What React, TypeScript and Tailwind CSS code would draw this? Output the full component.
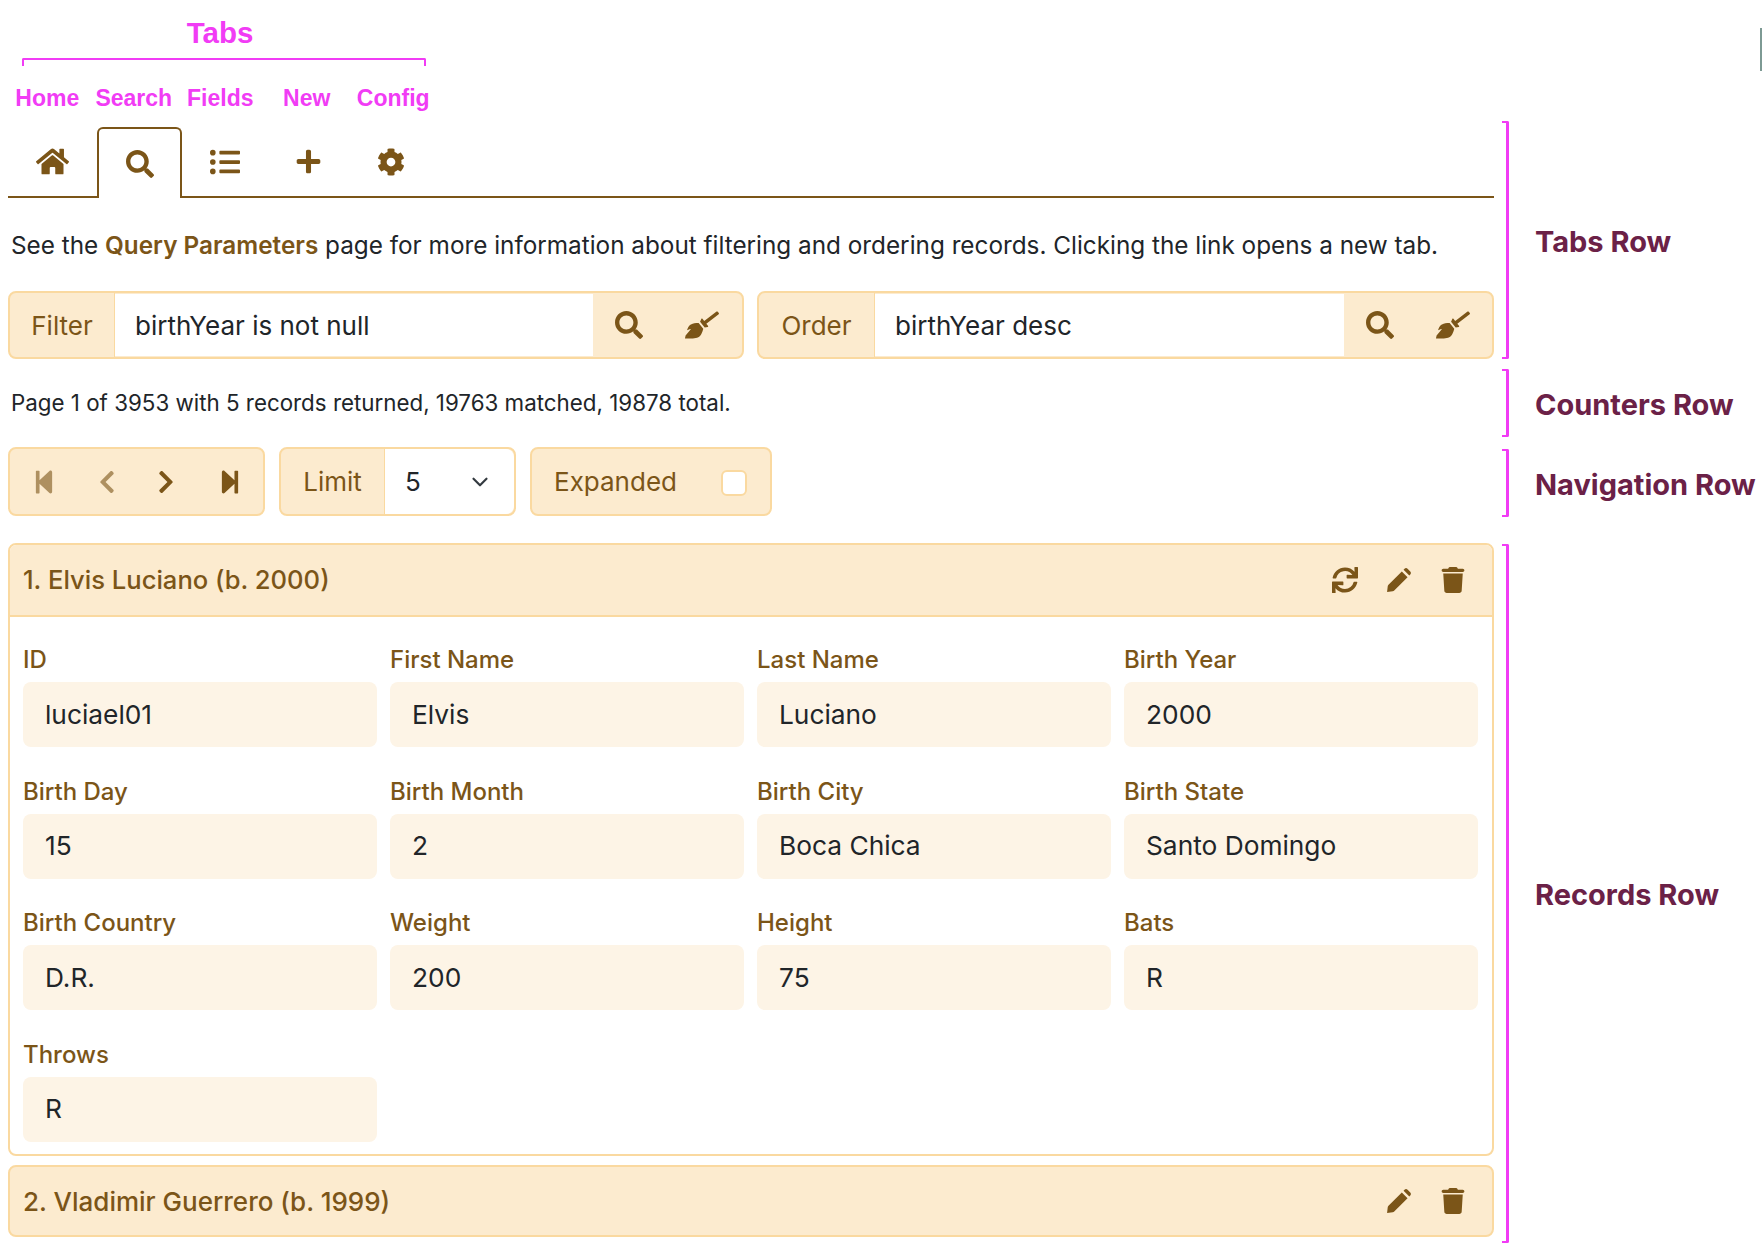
import { FaBroom, FaChevronLeft, FaChevronRight, FaCog, FaHome, FaListUl, FaPlus, FaSearch, FaStepBackward, FaStepForward, FaSync } from "react-icons/fa";
import { FaTrash } from "react-icons/fa6";
import { LuChevronDown } from "react-icons/lu";

const fields = [
  ["ID", "luciael01"],
  ["First Name", "Elvis"],
  ["Last Name", "Luciano"],
  ["Birth Year", "2000"],
  ["Birth Day", "15"],
  ["Birth Month", "2"],
  ["Birth City", "Boca Chica"],
  ["Birth State", "Santo Domingo"],
  ["Birth Country", "D.R."],
  ["Weight", "200"],
  ["Height", "75"],
  ["Bats", "R"],
  ["Throws", "R"],
];

const tabLabels = ["Home", "Search", "Fields", "New", "Config"];

function Pencil({ className }: { className: string }) {
  return (
    <svg viewBox="0 0 24 24" fill="currentColor" className={className}>
      <path d="M1 23l.6-5.2c.1-.6.3-1 .7-1.4L14.6 4.1l5.3 5.3L7.6 21.7c-.4.4-.8.6-1.4.7z" />
      <path d="M16.2 2.5l.9-.9c.8-.8 2-.8 2.8 0l2.5 2.5c.8.8.8 2 0 2.8l-.9.9z" />
    </svg>
  );
}

function RowNote({ label, className }: { label: string; className: string }) {
  return (
    <div className={`flex items-center ${className}`}>
      <div className="h-full w-[7px] rounded-r-[2px] border-y-2 border-r-[3px] border-[#f13cf5]" />
      <span className="ml-[26px] mt-[3px] whitespace-nowrap font-['Inter',sans-serif] text-[29px] font-bold text-[#6b2147]">{label}</span>
    </div>
  );
}

function SearchBox({ label, value, labelWidth, inputWidth, className }: { label: string; value: string; labelWidth: string; inputWidth: string; className: string }) {
  return (
    <div className={`flex h-[68px] items-stretch rounded-lg border-2 border-[#fad9a0] bg-[#fcebcf] ${className}`}>
      <div className={`flex items-center justify-center border-r border-[#fad9a0] text-[#7b5518] ${labelWidth}`}>{label}</div>
      <div className={`my-px flex items-center bg-white pl-[20px] text-[#212529] ${inputWidth}`}>{value}</div>
      <div className="flex flex-1 items-center text-[#7b5518]">
        <FaSearch className="ml-[22px] size-[28px]" />
        <FaBroom className="ml-[42px] size-[34px]" />
      </div>
    </div>
  );
}

export default function App() {
  return (
    <div className="relative flex h-[1248px] w-[1762px] overflow-hidden bg-white font-['Inter',sans-serif] text-[26px] text-[#212529]">
      <div className="ml-2 w-[1486px]">
        {/* tab annotation */}
        <div className="flex h-[127px] w-[426px] flex-col font-['Liberation_Sans',sans-serif] font-bold text-[#f13cf5]">
          <div className="ml-[14px] w-[396px] pt-[16px] text-center text-[29.5px] leading-[34px]">Tabs</div>
          <div className="ml-[14px] mt-[8px] h-[8px] w-[404px] rounded-t-[2px] border-x-2 border-t-2 border-[#f13cf5]" />
          <div className="-ml-1 mt-[15px] grid grid-cols-[repeat(5,86.5px)] text-center text-[23px] leading-[34px]">
            {tabLabels.map((t) => (
              <span key={t}>{t}</span>
            ))}
          </div>
        </div>

        {/* tabs */}
        <div className="flex h-[71px] items-end border-b-2 border-[#7b5518] text-[#7b5518]">
          <div className="flex h-[69px] w-[89px] items-center justify-center"><FaHome className="size-[33px]" /></div>
          <div className="-mb-[2px] flex h-[71px] w-[85px] items-center justify-center rounded-t-md border-2 border-b-0 border-[#7b5518] bg-white"><FaSearch className="size-[28px]" /></div>
          <div className="flex h-[69px] w-[85px] items-center justify-center"><FaListUl className="size-[30px]" /></div>
          <div className="flex h-[69px] w-[82px] items-center justify-center"><FaPlus className="size-[27px]" /></div>
          <div className="flex h-[69px] w-[84px] items-center justify-center"><FaCog className="size-[28px]" /></div>
        </div>

        <p className="ml-[3px] mt-[29px] whitespace-nowrap text-[24.3px] leading-[36px]">
          See the <a className="font-semibold text-[#7b5518]">Query Parameters</a> page for more information about filtering and ordering records. Clicking the link opens a new tab.
        </p>

        <div className="mt-[28px] flex gap-[13px]">
          <SearchBox label="Filter" value="birthYear is not null" labelWidth="w-[105px]" inputWidth="w-[478px]" className="w-[736px]" />
          <SearchBox label="Order" value="birthYear desc" labelWidth="w-[116px]" inputWidth="w-[469px]" className="w-[737px]" />
        </div>

        <p className="ml-[3px] mt-[29px] text-[22.35px] leading-[30px]">Page 1 of 3953 with 5 records returned, 19763 matched, 19878 total.</p>

        {/* navigation */}
        <div className="mt-[29px] flex h-[69px] text-[#7b5518]">
          <div className="flex w-[257px] items-center rounded-lg border-2 border-[#fad9a0] bg-[#fcebcf]">
            <FaStepBackward className="ml-[21px] size-[26px] opacity-60" />
            <FaChevronLeft className="ml-[37px] size-[26px] opacity-60" />
            <FaChevronRight className="ml-[33px] size-[26px]" />
            <FaStepForward className="ml-[38px] size-[26px]" />
          </div>
          <div className="ml-[14px] flex w-[237px] items-stretch rounded-lg border-2 border-[#fad9a0] bg-[#fcebcf]">
            <div className="flex w-[104px] items-center justify-center border-r border-[#fad9a0]">Limit</div>
            <div className="flex flex-1 items-center rounded-r-lg bg-white pl-[20px] text-[#212529]">
              5
              <LuChevronDown className="ml-[46px] size-[26px] text-[#343a40]" />
            </div>
          </div>
          <div className="ml-[14px] flex w-[242px] items-center rounded-lg border-2 border-[#fad9a0] bg-[#fcebcf]">
            <span className="ml-[22px]">Expanded</span>
            <span className="ml-auto mr-[23px] mt-[3px] size-[26px] rounded-md border-2 border-[#fad9a0] bg-white" />
          </div>
        </div>

        {/* records */}
        <div className="mt-[27px] h-[613px] rounded-lg border-2 border-[#fad9a0]">
          <div className="flex h-[72px] items-center rounded-t-md border-b-2 border-[#fad9a0] bg-[#fcebcf] pl-[13px] text-[#7b5518]">
            <span className="text-[25.6px] font-medium">1. Elvis Luciano (b. 2000)</span>
            <FaSync className="ml-auto size-[26px]" />
            <Pencil className="ml-[28px] size-[26px]" />
            <FaTrash className="ml-[28px] mr-[26px] size-[26px]" />
          </div>
          <div className="grid grid-cols-[repeat(4,354px)] gap-x-[13px] gap-y-[29.5px] pl-[13px] pt-[28px]">
            {fields.map(([name, value]) => (
              <div key={name}>
                <div className="mb-[7px] text-[24px] font-medium leading-[30px] text-[#7b5518]">{name}</div>
                <div className="flex h-[65px] items-center rounded-lg bg-[#fdf4e6] pl-[22px] text-[26.3px]">{value}</div>
              </div>
            ))}
          </div>
        </div>
        <div className="mt-[9px] flex h-[72px] items-center rounded-lg border-2 border-[#fad9a0] bg-[#fcebcf] pl-[13px] text-[#7b5518]">
          <span className="text-[26px] font-medium">2. Vladimir Guerrero (b. 1999)</span>
          <Pencil className="ml-auto size-[26px]" />
          <FaTrash className="ml-[28px] mr-[26px] size-[26px]" />
        </div>
      </div>

      {/* row annotations */}
      <div className="ml-[8px] flex flex-col pt-[121px]">
        <RowNote label="Tabs Row" className="h-[238px]" />
        <RowNote label="Counters Row" className="mt-[10px] h-[68px]" />
        <RowNote label="Navigation Row" className="mt-[12px] h-[68px]" />
        <RowNote label="Records Row" className="mt-[27px] h-[699px]" />
      </div>

      <div className="absolute right-0 top-[28px] h-[43px] w-[2px] bg-[#7d9a94]" />
    </div>
  );
}
